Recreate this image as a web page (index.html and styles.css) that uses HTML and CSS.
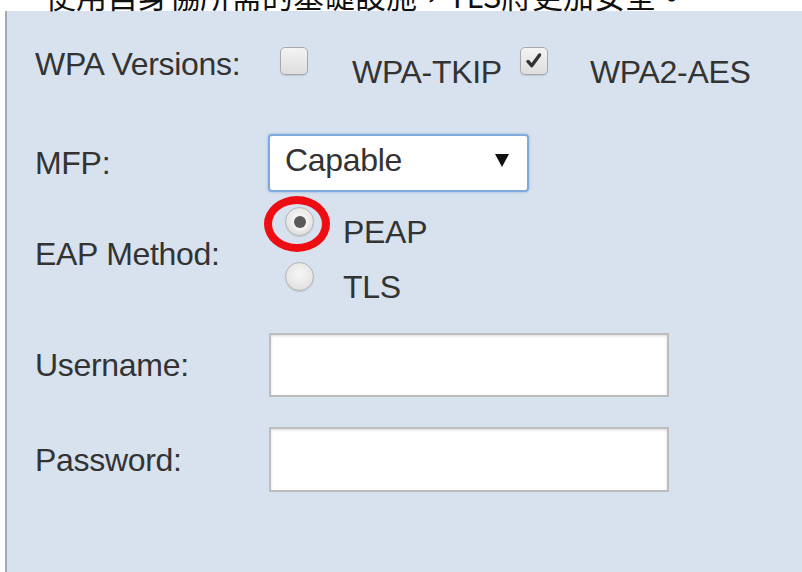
FILE: index.html
```html
<!DOCTYPE html>
<html lang="zh-Hant">
<head>
<meta charset="utf-8">
<title>Wireless Security</title>
<link rel="stylesheet" href="styles.css">
</head>
<body>
<p class="caption">使用自身協所需的基礎設施，TLS將更加安全。</p>
<form class="panel">
  <div class="row row-wpa">
    <span class="label">WPA Versions:</span>
    <span class="check check-tkip"></span>
    <span class="opt opt-tkip">WPA-TKIP</span>
    <span class="check check-aes">
      <svg viewBox="0 0 28 28" width="28" height="28"><path d="M7.5 14.5 L11.5 19 L20 7.5" fill="none" stroke="#333" stroke-width="3.6" stroke-linecap="round" stroke-linejoin="round"/></svg>
    </span>
    <span class="opt opt-aes">WPA2-AES</span>
  </div>

  <div class="row row-mfp">
    <span class="label">MFP:</span>
    <div class="select">
      <span class="select-value">Capable</span>
      <svg class="caret" viewBox="0 0 14 13" width="14" height="13"><polygon points="0,0 14,0 7,13" fill="#111"/></svg>
    </div>
  </div>

  <div class="row row-eap">
    <span class="label label-eap">EAP Method:</span>
    <div class="radios">
      <div class="radio-opt">
        <span class="radio radio-on"><span class="dot"></span><span class="mark"></span></span>
        <span class="opt">PEAP</span>
      </div>
      <div class="radio-opt radio-opt-tls">
        <span class="radio"></span>
        <span class="opt">TLS</span>
      </div>
    </div>
  </div>

  <div class="row row-user">
    <span class="label">Username:</span>
    <span class="field field-user"></span>
  </div>

  <div class="row row-pass">
    <span class="label">Password:</span>
    <span class="field field-pass"></span>
  </div>
</form>
</body>
</html>
```

FILE: styles.css
```css
html, body {
  margin: 0;
  padding: 0;
  background: #ffffff;
  overflow: hidden;
}

body {
  font-family: "Liberation Sans", Arial, sans-serif;
  color: #333333;
}

/* heading line above the settings panel, scrolled mostly out of view */
.caption {
  margin: -21px 0 0 0;
  padding-left: 45px;
  height: 32px;
  line-height: 32px;
  font-family: "Noto Sans CJK TC", "Noto Sans", sans-serif;
  font-size: 31px;
  color: #111111;
  white-space: nowrap;
}

.panel {
  box-sizing: border-box;
  min-height: calc(100vh - 11px);
  margin: 0 0 0 5px;
  padding: 35px 0 0 28px;
  background: #d7e2ee;
  border-left: 2px solid #a2aab3;
  font-size: 32px;
  line-height: 36px;
  letter-spacing: -0.3px;
}

.row {
  display: flex;
  align-items: center;
}

.label {
  flex: none;
  width: 233px;
  white-space: nowrap;
}

.opt {
  white-space: nowrap;
}

/* WPA versions */
.row-wpa {
  align-items: flex-start;
}

.check {
  box-sizing: border-box;
  width: 28px;
  height: 28px;
  margin-top: 1px;
  border: 1px solid #a9a9a9;
  border-radius: 5px;
  background: linear-gradient(#f3f3f3, #dedede);
  box-shadow: 0 1px 1px rgba(0, 0, 0, 0.12);
  display: flex;
  align-items: center;
  justify-content: center;
}

.check svg {
  display: block;
}

.check-tkip {
  margin-left: 12px;
}

.opt-tkip {
  margin: 8px 0 0 44px;
}

.check-aes {
  margin-left: 18px;
}

.opt-aes {
  margin: 8px 0 0 42px;
}

/* MFP select */
.row-mfp {
  margin-top: 44px;
}

.select {
  box-sizing: border-box;
  width: 261px;
  height: 58px;
  padding: 0 18px 6px 15px;
  background: #ffffff;
  border: 2px solid #80a9de;
  border-radius: 4px;
  box-shadow: 0 0 3px rgba(90, 140, 210, 0.55);
  display: flex;
  align-items: center;
}

.caret {
  margin-left: auto;
  display: block;
}

/* EAP method radios */
.row-eap {
  margin-top: 22px;
  align-items: flex-start;
}

.label-eap {
  margin-top: 22px;
}

.radio-opt {
  display: flex;
  align-items: flex-start;
}

.radio-opt-tls {
  margin-top: 19px;
}

.radio {
  position: relative;
  box-sizing: border-box;
  flex: none;
  width: 29px;
  height: 29px;
  margin: -7px 0 0 17px;
  border: 1px solid #b4b4b4;
  border-radius: 50%;
  background: radial-gradient(circle at 50% 40%, #f7f7f7 0%, #e6e6e6 60%, #d6d6d6 100%);
  box-shadow: 0 1px 1px rgba(0, 0, 0, 0.12);
}

.radio + .opt {
  margin-left: 29px;
}

.radio-on .dot {
  position: absolute;
  left: 50%;
  top: 50%;
  width: 12px;
  height: 12px;
  margin: -6px 0 0 -6px;
  border-radius: 50%;
  background: #5a5a5a;
  box-shadow: 0 0 0 3px #f2f2f2;
}

/* red highlight ring drawn over the selected option */
.radio-on .mark {
  position: absolute;
  left: -22px;
  top: -12px;
  width: 50px;
  height: 40px;
  border: 8px solid #ee0d12;
  border-radius: 50%;
}

/* text fields */
.row-user {
  margin-top: 28px;
}

.row-pass {
  margin-top: 30px;
}

.field {
  box-sizing: border-box;
  width: 400px;
  height: 64px;
  margin-left: 1px;
  background: #ffffff;
  border: 2px solid #bdbdbd;
  box-shadow: inset 0 1px 3px rgba(0, 0, 0, 0.15);
}

.field-pass {
  height: 65px;
}
```
